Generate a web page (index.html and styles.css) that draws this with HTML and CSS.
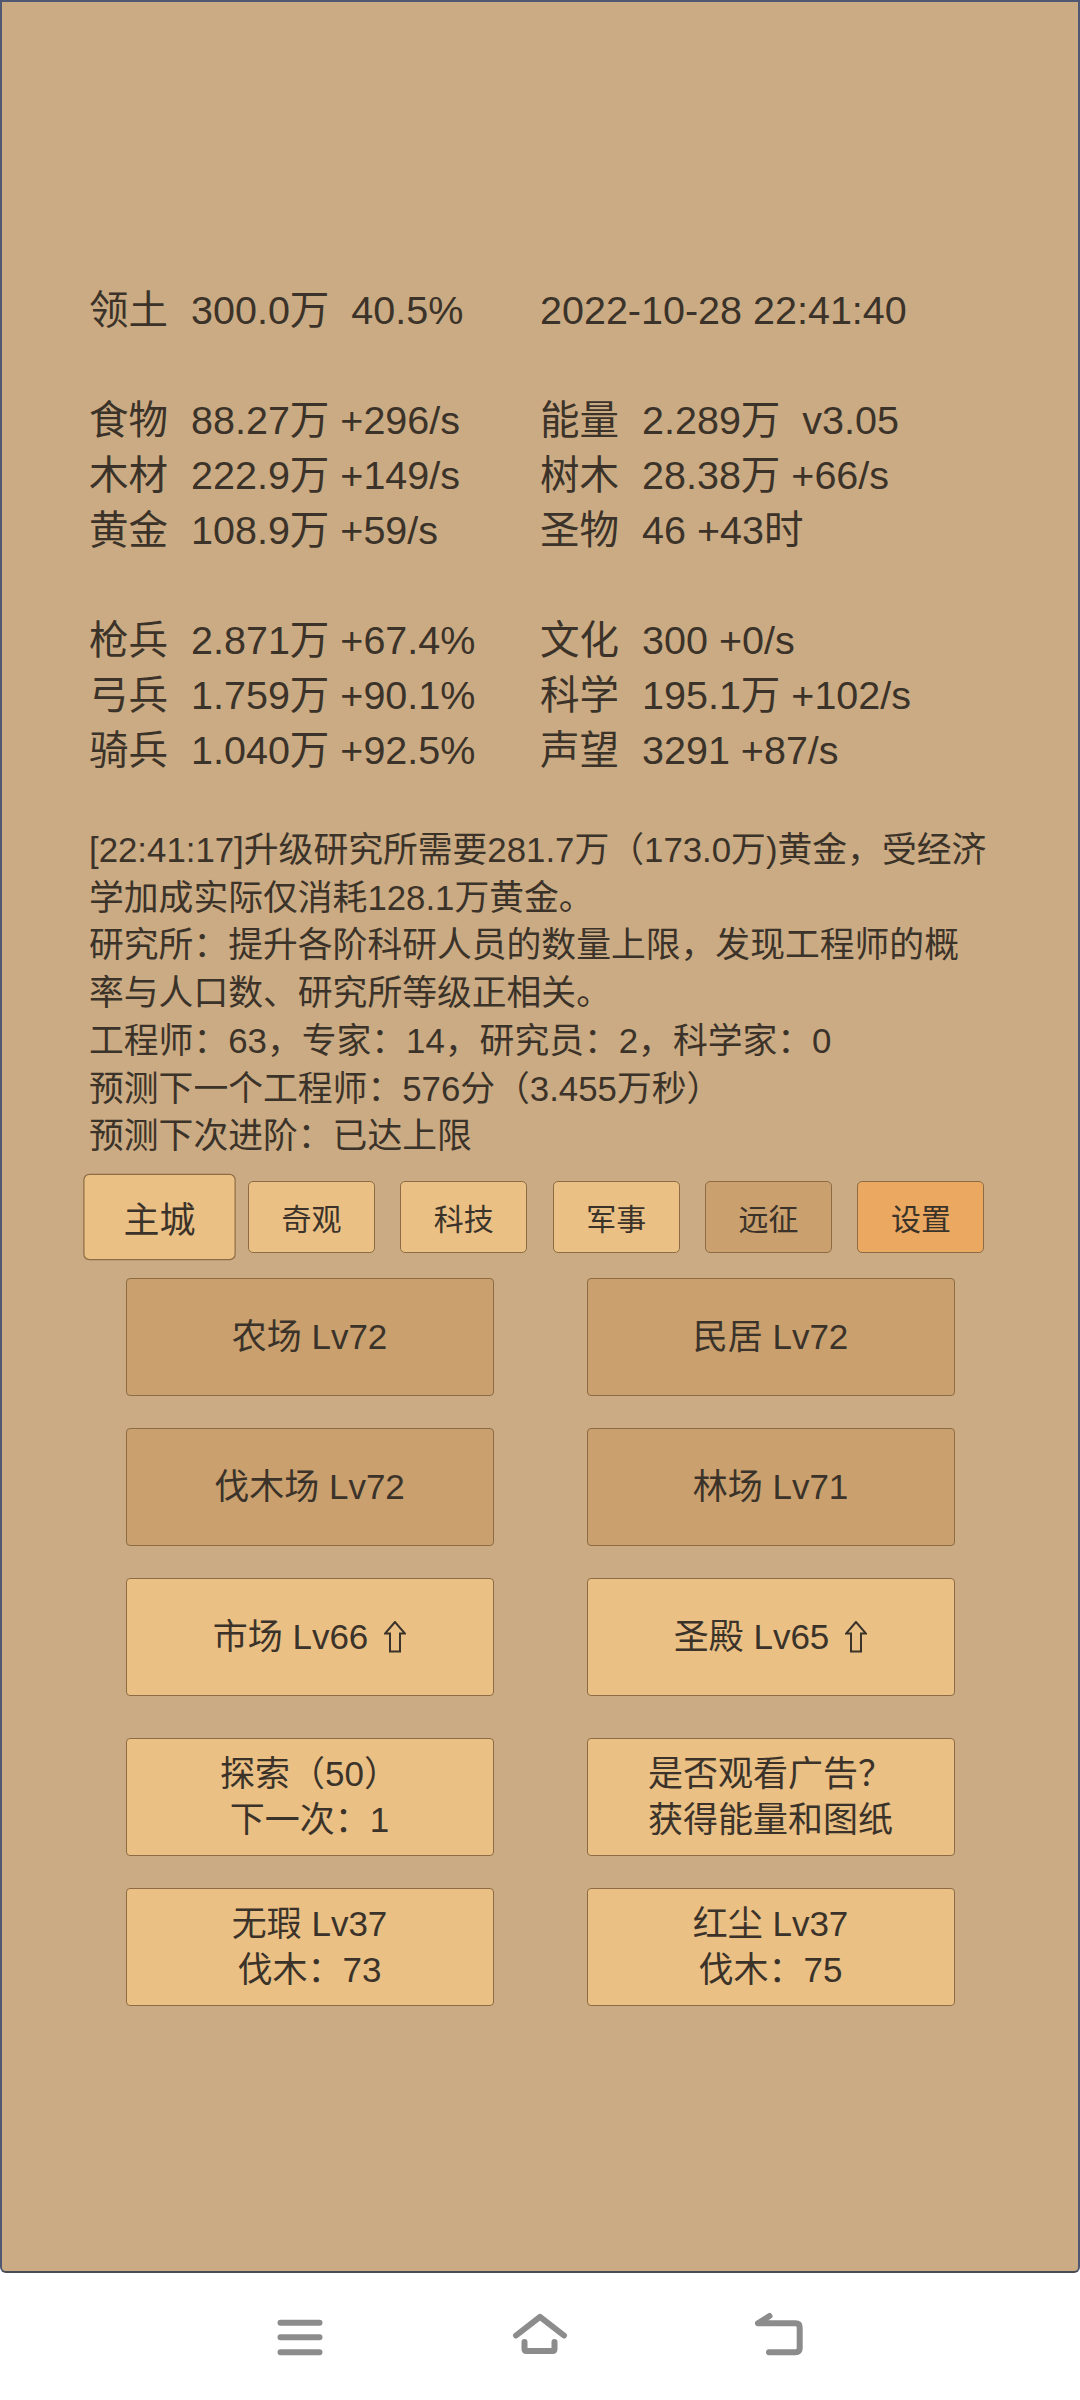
FILE: index.html
```html
<!DOCTYPE html>
<html lang="zh">
<head>
    <meta charset="UTF-8">
    <meta name="viewport" content="width=device-width, initial-scale=1.0">
    <title>主城</title>
    <link rel="stylesheet" href="styles.css">
</head>
<body>
    <div class="screen">
        <div class="stats">
            <div class="line"><div><span class="lbl">领土</span>300.0万  40.5%</div><div>2022-10-28 22:41:40</div></div>
            <div class="gap"></div>
            <div class="line"><div><span class="lbl">食物</span>88.27万 +296/s</div><div><span class="lbl">能量</span>2.289万  v3.05</div></div>
            <div class="line"><div><span class="lbl">木材</span>222.9万 +149/s</div><div><span class="lbl">树木</span>28.38万 +66/s</div></div>
            <div class="line"><div><span class="lbl">黄金</span>108.9万 +59/s</div><div><span class="lbl">圣物</span>46 +43时</div></div>
            <div class="gap"></div>
            <div class="line"><div><span class="lbl">枪兵</span>2.871万 +67.4%</div><div><span class="lbl">文化</span>300 +0/s</div></div>
            <div class="line"><div><span class="lbl">弓兵</span>1.759万 +90.1%</div><div><span class="lbl">科学</span>195.1万 +102/s</div></div>
            <div class="line"><div><span class="lbl">骑兵</span>1.040万 +92.5%</div><div><span class="lbl">声望</span>3291 +87/s</div></div>
        </div>

        <div class="log">
            [22:41:17]升级研究所需要281.7万（173.0万)黄金，受经济<br>
            学加成实际仅消耗128.1万黄金。<br>
            研究所：提升各阶科研人员的数量上限，发现工程师的概<br>
            率与人口数、研究所等级正相关。<br>
            工程师：63，专家：14，研究员：2，科学家：0<br>
            预测下一个工程师：576分（3.455万秒）<br>
            预测下次进阶：已达上限
        </div>

        <div class="tabs">
            <div class="tab active">主城</div>
            <div class="tab">奇观</div>
            <div class="tab">科技</div>
            <div class="tab">军事</div>
            <div class="tab dark">远征</div>
            <div class="tab orange">设置</div>
        </div>

        <div class="buildings">
            <div class="brow">
                <div class="bld dark">农场 Lv72</div>
                <div class="bld dark">民居 Lv72</div>
            </div>
            <div class="brow">
                <div class="bld dark">伐木场 Lv72</div>
                <div class="bld dark">林场 Lv71</div>
            </div>
            <div class="brow">
                <div class="bld"><div class="ln">市场 Lv66<svg class="up" viewBox="0 0 22 32"><path d="M11 1 L1 12.5 H6 V30.5 H16 V12.5 H21 Z"/></svg></div></div>
                <div class="bld"><div class="ln">圣殿 Lv65<svg class="up" viewBox="0 0 22 32"><path d="M11 1 L1 12.5 H6 V30.5 H16 V12.5 H21 Z"/></svg></div></div>
            </div>
            <div class="brow spaced">
                <div class="bld"><div>探索（50）</div><div>下一次：1</div></div>
                <div class="bld"><div>是否观看广告？</div><div>获得能量和图纸</div></div>
            </div>
            <div class="brow">
                <div class="bld"><div>无瑕 Lv37</div><div>伐木：73</div></div>
                <div class="bld"><div>红尘 Lv37</div><div>伐木：75</div></div>
            </div>
        </div>
    </div>

    <div class="navbar">
        <svg class="nav-icon" viewBox="0 0 60 50">
            <path d="M10.5 10.8 H49.5 M10.5 25.2 H49.5 M10.5 40.2 H49.5"/>
        </svg>
        <svg class="nav-icon" viewBox="0 0 60 50">
            <path d="M6 23.5 L30 4.8 L54 23.5"/>
            <path d="M14.5 30 V37 Q14.5 39 16.5 39 H42.5 Q44.5 39 44.5 37 V30"/>
        </svg>
        <svg class="nav-icon" viewBox="0 0 60 50">
            <path d="M19.5 4 L8 11.3 H45.5 Q49.7 11.3 49.7 15.5 V36 Q49.7 40.2 45.5 40.2 H19"/>
        </svg>
    </div>
</body>
</html>
```

FILE: styles.css
```css
body {
    margin: 0;
    background-color: #fff;
    font-family: "Liberation Sans", "Noto Sans CJK SC", sans-serif;
    color: #3b3329;
}
.screen {
    box-sizing: border-box;
    height: 2273px;
    background-color: #cbab83;
    border: 2px solid #4f5870;
    border-bottom-color: #474c56;
    border-radius: 0 0 6px 6px;
    padding-top: 281px;
}
.stats {
    padding-left: 87px;
    font-size: 39.5px;
    line-height: 55px;
}
.stats .line {
    display: grid;
    grid-template-columns: 451px auto;
    height: 55px;
}
.stats .line div {
    white-space: pre;
}
.stats .gap {
    height: 55px;
}
.lbl {
    display: inline-block;
    width: 102px;
}
.log {
    margin-top: 48px;
    padding-left: 87px;
    font-size: 34.8px;
    line-height: 47.7px;
    white-space: nowrap;
}
.tabs {
    display: flex;
    justify-content: center;
    gap: 25.4px;
    margin-top: 21px;
}
.tab {
    box-sizing: border-box;
    width: 127px;
    height: 72px;
    display: flex;
    align-items: center;
    justify-content: center;
    background-color: #eac085;
    border: 1px solid #8d6c45;
    border-radius: 5px;
    font-size: 30px;
}
.tab.active {
    transform: scale(1.2);
}
.tab.dark {
    background-color: #c9a06e;
}
.tab.orange {
    background-color: #eaa860;
}
.buildings {
    margin-top: 25px;
    display: flex;
    flex-direction: column;
    align-items: center;
    gap: 32px;
}
.brow {
    display: flex;
    gap: 93px;
}
.brow.spaced {
    margin-top: 10px;
}
.bld {
    box-sizing: border-box;
    width: 368px;
    height: 118px;
    display: flex;
    flex-direction: column;
    align-items: center;
    justify-content: center;
    background-color: #eac085;
    border: 1px solid #8d6c45;
    border-radius: 4px;
    font-size: 35px;
    line-height: 46px;
    white-space: pre;
}
.bld.dark {
    background-color: #c9a06e;
}
.bld .ln {
    display: flex;
    align-items: center;
}
.up {
    width: 22px;
    height: 32px;
    margin-left: 16px;
    fill: none;
    stroke: #3b3329;
    stroke-width: 2;
    stroke-linejoin: miter;
}
.navbar {
    height: 127px;
    display: flex;
    justify-content: center;
    align-items: center;
    gap: 180px;
}
.nav-icon {
    width: 60px;
    height: 50px;
    fill: none;
    stroke: #8c8c8c;
    stroke-width: 6;
    stroke-linecap: round;
    stroke-linejoin: round;
}
```
